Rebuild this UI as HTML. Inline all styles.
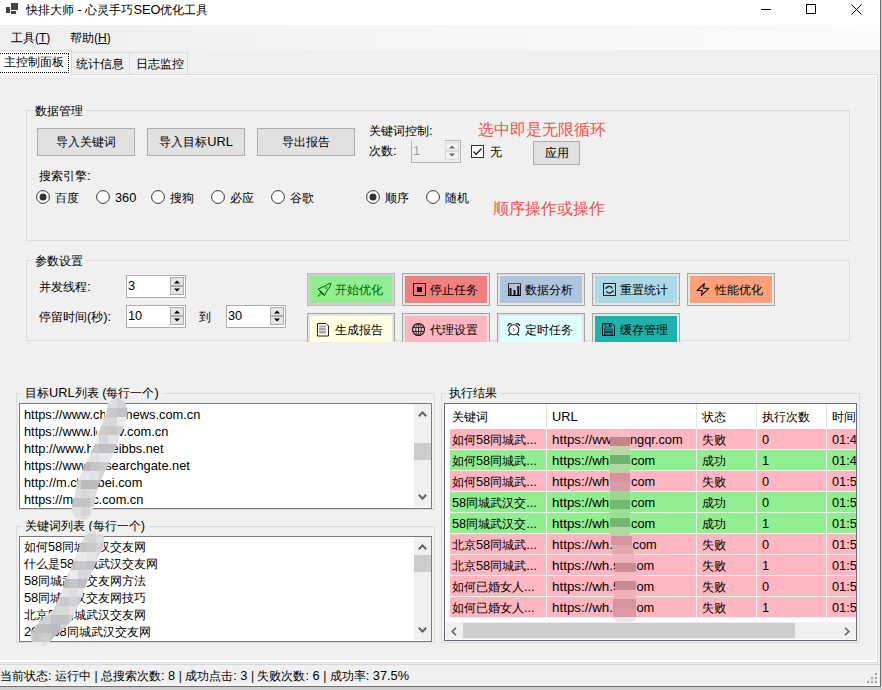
<!DOCTYPE html>
<html><head><meta charset="utf-8"><style>
*{box-sizing:border-box;margin:0;padding:0}
html,body{width:882px;height:690px;overflow:hidden;background:#f0f0f0}
body{position:relative;font-family:"Liberation Sans",sans-serif;font-size:12px;color:#000}
.a{position:absolute}
.t{position:absolute;white-space:nowrap;line-height:14px;font-size:12px}
.L{font-size:12.8px}
svg{position:absolute;overflow:visible}
</style></head><body>
<div class="a" style="left:0px;top:0px;width:880px;height:25px;background:#fff"></div>
<div class="a" style="left:6px;top:7px;width:4px;height:6px;background:#444"></div>
<div class="a" style="left:11px;top:3px;width:7px;height:7px;background:#444"></div>
<div class="a" style="left:11px;top:11px;width:5px;height:3px;background:#444"></div>
<div class="t" style="left:26px;top:3px;">快排大师<span class="L"> - </span>心灵手巧<span class="L">SEO</span>优化工具</div>
<div class="a" style="left:761px;top:9px;width:10px;height:1px;background:#000"></div>
<div class="a" style="left:806px;top:4px;width:10px;height:10px;border:1px solid #000"></div>
<svg style="left:851px;top:4px" width="11" height="11"><path d="M0.5 0.5L10.5 10.5M10.5 0.5L0.5 10.5" stroke="#000" stroke-width="1"/></svg>
<div class="a" style="left:0px;top:25px;width:880px;height:25px;background:linear-gradient(90deg,#efefef 0%,#f6f6f6 50%,#fbfbfb 100%)"></div>
<div class="t" style="left:11px;top:31px;">工具(<u>T</u>)</div>
<div class="t" style="left:70px;top:31px;">帮助(<u>H</u>)</div>
<div class="a" style="left:0px;top:50px;width:880px;height:25px;background:#f0f0f0"></div>
<div class="a" style="left:71px;top:52px;width:59px;height:23px;background:#f0f0f0;border:1px solid #d9d9d9;border-bottom:none"></div>
<div class="a" style="left:129px;top:52px;width:59px;height:23px;background:#f0f0f0;border:1px solid #d9d9d9;border-bottom:none"></div>
<div class="a" style="left:0px;top:74px;width:878px;height:1px;background:#d9d9d9"></div>
<div class="a" style="left:0px;top:75px;width:877px;height:1px;background:#fff"></div>
<div class="a" style="left:877px;top:74px;width:1px;height:589px;background:#d9d9d9"></div>
<div class="a" style="left:876px;top:75px;width:1px;height:587px;background:#fff"></div>
<div class="a" style="left:0px;top:660px;width:877px;height:2px;background:#fff"></div>
<div class="a" style="left:0px;top:662px;width:878px;height:1px;background:#dadada"></div>
<div class="a" style="left:0px;top:50px;width:72px;height:26px;background:#fff;border-top:1px solid #d9d9d9;border-right:1px solid #d9d9d9"></div>
<div class="a" style="left:0px;top:53px;width:69px;height:20px;border:1px dotted #000;border-left:none"></div>
<div class="t" style="left:4px;top:55px;">主控制面板</div>
<div class="t" style="left:76px;top:57px;">统计信息</div>
<div class="t" style="left:136px;top:57px;">日志监控</div>
<div class="a" style="left:0px;top:664px;width:880px;height:1px;background:#d7d7d7"></div>
<div class="a" style="left:0px;top:685px;width:880px;height:1px;background:#f8f8f8"></div>
<div class="t" style="left:0px;top:669px;">当前状态<span class="L">: </span>运行中 | 总搜索次数<span class="L">: 8 </span>| 成功点击<span class="L">: 3 </span>| 失败次数<span class="L">: 6 </span>| 成功率<span class="L">: 37.5%</span></div>
<div class="a" style="left:875px;top:673px;width:2px;height:2px;background:#a0a0a0"></div>
<div class="a" style="left:871px;top:677px;width:2px;height:2px;background:#a0a0a0"></div>
<div class="a" style="left:875px;top:677px;width:2px;height:2px;background:#a0a0a0"></div>
<div class="a" style="left:867px;top:681px;width:2px;height:2px;background:#a0a0a0"></div>
<div class="a" style="left:871px;top:681px;width:2px;height:2px;background:#a0a0a0"></div>
<div class="a" style="left:875px;top:681px;width:2px;height:2px;background:#a0a0a0"></div>
<div class="a" style="left:880px;top:0px;width:1px;height:687px;background:#707070"></div>
<div class="a" style="left:881px;top:0px;width:1px;height:690px;background:#d0d0d0"></div>
<div class="a" style="left:0px;top:686px;width:881px;height:1px;background:#707070"></div>
<div class="a" style="left:0px;top:687px;width:882px;height:3px;background:#cccccc"></div>
<div class="a" style="left:26px;top:110px;width:824px;height:131px;border:1px solid #dcdcdc"></div>
<div class="t" style="left:33px;top:104px;padding:0 3px 0 2px;background:#f0f0f0">数据管理</div>
<div class="a" style="left:26px;top:260px;width:824px;height:81px;border:1px solid #dcdcdc"></div>
<div class="t" style="left:33px;top:254px;padding:0 3px 0 2px;background:#f0f0f0">参数设置</div>
<div class="a" style="left:16px;top:393px;width:419px;height:117px;border:1px solid #dcdcdc"></div>
<div class="t" style="left:23px;top:386px;padding:0 3px 0 2px;background:#f0f0f0">目标<span class="L">URL</span>列表<span class="L"> (</span>每行一个<span class="L">)</span></div>
<div class="a" style="left:16px;top:526px;width:419px;height:117px;border:1px solid #dcdcdc"></div>
<div class="t" style="left:23px;top:519px;padding:0 3px 0 2px;background:#f0f0f0">关键词列表<span class="L"> (</span>每行一个<span class="L">)</span></div>
<div class="a" style="left:441px;top:393px;width:419px;height:250px;border:1px solid #dcdcdc"></div>
<div class="t" style="left:447px;top:386px;padding:0 3px 0 2px;background:#f0f0f0">执行结果</div>
<div class="a" style="left:37px;top:128px;width:98px;height:28px;background:#e1e1e1;border:1px solid #adadad"></div>
<div class="t" style="left:37px;top:135px;width:98px;text-align:center">导入关键词</div>
<div class="a" style="left:147px;top:128px;width:98px;height:28px;background:#e1e1e1;border:1px solid #adadad"></div>
<div class="t" style="left:147px;top:135px;width:98px;text-align:center">导入目标<span class="L">URL</span></div>
<div class="a" style="left:257px;top:128px;width:98px;height:28px;background:#e1e1e1;border:1px solid #adadad"></div>
<div class="t" style="left:257px;top:135px;width:98px;text-align:center">导出报告</div>
<div class="a" style="left:533px;top:141px;width:47px;height:24px;background:#e1e1e1;border:1px solid #adadad"></div>
<div class="t" style="left:533px;top:146px;width:47px;text-align:center">应用</div>
<div class="t" style="left:369px;top:124px;">关键词控制<span class="L">:</span></div>
<div class="t" style="left:369px;top:144px;">次数<span class="L">:</span></div>
<div class="t" style="left:478px;top:121px;color:#f5504f;font-size:16px;line-height:18px">选中即是无限循环</div>
<div class="t" style="left:493px;top:200px;color:#f5504f;font-size:16px;line-height:18px">顺序操作或操作</div>
<div class="a" style="left:411px;top:140px;width:50px;height:23px;background:#f0f0f0;border:1px solid #b4b4b4;border-top-color:#f0f0f0"></div>
<div class="a" style="left:445px;top:140px;width:16px;height:1px;background:#b4b4b4"></div>
<div class="t" style="left:413px;top:144px;color:#a0a0a0"><span class="L">1</span></div>
<div class="a" style="left:445px;top:142px;width:14px;height:9px;background:#f0f0f0;border:1px solid #dadada"></div>
<div class="a" style="left:445px;top:151px;width:14px;height:9px;background:#f0f0f0;border:1px solid #dadada"></div>
<svg style="left:449px;top:145px" width="6" height="4"><path d="M0 3.5L3 0.5L6 3.5Z" fill="#6a6a6a"/></svg>
<svg style="left:449px;top:153px" width="6" height="4"><path d="M0 0.5L3 3.5L6 0.5Z" fill="#6a6a6a"/></svg>
<div class="a" style="left:126px;top:275px;width:60px;height:23px;background:#fff;border:1px solid #aaacb0"></div>
<div class="t" style="left:128px;top:279px;color:#000"><span class="L">3</span></div>
<div class="a" style="left:170px;top:277px;width:14px;height:9px;background:#e5e5e5;border:1px solid #adadad"></div>
<div class="a" style="left:170px;top:286px;width:14px;height:9px;background:#e5e5e5;border:1px solid #adadad"></div>
<svg style="left:174px;top:280px" width="6" height="4"><path d="M0 3.5L3 0.5L6 3.5Z" fill="#000"/></svg>
<svg style="left:174px;top:288px" width="6" height="4"><path d="M0 0.5L3 3.5L6 0.5Z" fill="#000"/></svg>
<div class="a" style="left:126px;top:305px;width:60px;height:23px;background:#fff;border:1px solid #aaacb0"></div>
<div class="t" style="left:128px;top:309px;color:#000"><span class="L">10</span></div>
<div class="a" style="left:170px;top:307px;width:14px;height:9px;background:#e5e5e5;border:1px solid #adadad"></div>
<div class="a" style="left:170px;top:316px;width:14px;height:9px;background:#e5e5e5;border:1px solid #adadad"></div>
<svg style="left:174px;top:310px" width="6" height="4"><path d="M0 3.5L3 0.5L6 3.5Z" fill="#000"/></svg>
<svg style="left:174px;top:318px" width="6" height="4"><path d="M0 0.5L3 3.5L6 0.5Z" fill="#000"/></svg>
<div class="a" style="left:226px;top:305px;width:60px;height:23px;background:#fff;border:1px solid #aaacb0"></div>
<div class="t" style="left:228px;top:309px;color:#000"><span class="L">30</span></div>
<div class="a" style="left:270px;top:307px;width:14px;height:9px;background:#e5e5e5;border:1px solid #adadad"></div>
<div class="a" style="left:270px;top:316px;width:14px;height:9px;background:#e5e5e5;border:1px solid #adadad"></div>
<svg style="left:274px;top:310px" width="6" height="4"><path d="M0 3.5L3 0.5L6 3.5Z" fill="#000"/></svg>
<svg style="left:274px;top:318px" width="6" height="4"><path d="M0 0.5L3 3.5L6 0.5Z" fill="#000"/></svg>
<div class="t" style="left:39px;top:280px;">并发线程<span class="L">:</span></div>
<div class="t" style="left:39px;top:310px;">停留时间<span class="L">(</span>秒<span class="L">):</span></div>
<div class="t" style="left:199px;top:310px;">到</div>
<div class="a" style="left:471px;top:145px;width:13px;height:13px;background:#fff;border:1px solid #333"></div>
<svg style="left:471px;top:145px" width="13" height="13"><path d="M2.5 6.5L5.2 9.2L10.5 3.5" stroke="#222" stroke-width="1.3" fill="none"/></svg>
<div class="t" style="left:490px;top:145px;">无</div>
<div class="t" style="left:39px;top:169px;">搜索引擎<span class="L">:</span></div>
<svg style="left:35.5px;top:189.5px" width="14" height="14"><circle cx="7" cy="7" r="6.4" fill="#fff" stroke="#333" stroke-width="1"/><circle cx="7" cy="7" r="3.5" fill="#333"/></svg>
<div class="t" style="left:55px;top:191px;">百度</div>
<svg style="left:95.5px;top:189.5px" width="14" height="14"><circle cx="7" cy="7" r="6.4" fill="#fff" stroke="#333" stroke-width="1"/></svg>
<div class="t" style="left:115px;top:191px;"><span class="L">360</span></div>
<svg style="left:150.5px;top:189.5px" width="14" height="14"><circle cx="7" cy="7" r="6.4" fill="#fff" stroke="#333" stroke-width="1"/></svg>
<div class="t" style="left:170px;top:191px;">搜狗</div>
<svg style="left:210.5px;top:189.5px" width="14" height="14"><circle cx="7" cy="7" r="6.4" fill="#fff" stroke="#333" stroke-width="1"/></svg>
<div class="t" style="left:230px;top:191px;">必应</div>
<svg style="left:270.5px;top:189.5px" width="14" height="14"><circle cx="7" cy="7" r="6.4" fill="#fff" stroke="#333" stroke-width="1"/></svg>
<div class="t" style="left:290px;top:191px;">谷歌</div>
<svg style="left:365.5px;top:189.5px" width="14" height="14"><circle cx="7" cy="7" r="6.4" fill="#fff" stroke="#333" stroke-width="1"/><circle cx="7" cy="7" r="3.5" fill="#333"/></svg>
<div class="t" style="left:385px;top:191px;">顺序</div>
<svg style="left:425.5px;top:189.5px" width="14" height="14"><circle cx="7" cy="7" r="6.4" fill="#fff" stroke="#333" stroke-width="1"/></svg>
<div class="t" style="left:445px;top:191px;">随机</div>
<div class="a" style="left:0;top:0;width:882px;height:342px;overflow:hidden">
<div class="a" style="left:307px;top:273px;width:88px;height:33px;background:#cfcfd3;border:1px solid #bdbdbd"></div>
<div class="a" style="left:310px;top:276px;width:82px;height:27px;background:#90ee90"></div>
<svg style="left:317px;top:283px" width="14" height="14"><path d="M14 0.3C12 0.6 9.5 1.5 7.5 3.4L5.4 4 1 6.2 3.1 8.1 6.2 11.2 7.3 12.8 9.3 9.2 10.5 7C12.4 4.9 13.5 2.6 14 0.3Z" fill="none" stroke="#006400" stroke-width="1" stroke-linejoin="round"/><path d="M3 8.1L6.4 11.5" stroke="#005000" stroke-width="1.7"/><path d="M3.4 10C2.2 10.8 1.3 12 0.9 13.3 2.2 13 3.4 12.1 4.3 10.9" fill="none" stroke="#2a7a2a" stroke-width="0.9"/><circle cx="9.2" cy="4.8" r="1.1" fill="none" stroke="#2a8a2a" stroke-width="0.8"/></svg>
<div class="t" style="left:335px;top:283px;color:#006400">开始优化</div>
<div class="a" style="left:402px;top:273px;width:88px;height:33px;background:#e3e6e6;border:1px solid #a5a5a5"></div>
<div class="a" style="left:405px;top:276px;width:82px;height:27px;background:#f08080"></div>
<svg style="left:412px;top:283px" width="14" height="14"><rect x="1.5" y="0.5" width="12" height="12" fill="none" stroke="#111" stroke-width="1"/><rect x="5" y="4" width="5" height="5" fill="#000"/></svg>
<div class="t" style="left:430px;top:283px;color:#000">停止任务</div>
<div class="a" style="left:497px;top:273px;width:88px;height:33px;background:#e3e6e6;border:1px solid #a5a5a5"></div>
<div class="a" style="left:500px;top:276px;width:82px;height:27px;background:#b0c4de"></div>
<svg style="left:507px;top:283px" width="14" height="14"><rect x="1.5" y="0.5" width="12" height="12" fill="none" stroke="#222" stroke-width="1"/><rect x="0.8" y="0" width="13.4" height="1" fill="#555"/><rect x="2.5" y="5" width="2" height="7.5" fill="#111"/><rect x="6.5" y="7" width="2" height="5.5" fill="#111"/><rect x="10.3" y="3" width="2" height="9.5" fill="#111"/><rect x="1" y="12" width="13" height="1" fill="#000"/></svg>
<div class="t" style="left:525px;top:283px;color:#000">数据分析</div>
<div class="a" style="left:592px;top:273px;width:88px;height:33px;background:#e3e6e6;border:1px solid #a5a5a5"></div>
<div class="a" style="left:595px;top:276px;width:82px;height:27px;background:#add8e6"></div>
<svg style="left:602px;top:283px" width="14" height="14"><rect x="1.5" y="0.5" width="12" height="12" fill="none" stroke="#222" stroke-width="1"/><path d="M4.3 5.2A3.3 3.3 0 0 1 10.4 5.6M10.6 8A3.3 3.3 0 0 1 4.5 8.2" fill="none" stroke="#111" stroke-width="1.1"/><path d="M3.6 3.8L5.2 5.5 3.4 6Z" fill="#111"/><path d="M11.4 9.4L9.9 7.7 11.6 7.3Z" fill="#111"/></svg>
<div class="t" style="left:620px;top:283px;color:#000">重置统计</div>
<div class="a" style="left:687px;top:273px;width:88px;height:33px;background:#e3e6e6;border:1px solid #a5a5a5"></div>
<div class="a" style="left:690px;top:276px;width:82px;height:27px;background:#ffa07a"></div>
<svg style="left:692px;top:283px" width="14" height="14"><path d="M12.5 0.5L5.2 7.5 10.4 7.6 9.4 12.4 16.7 5.4 11.5 5.1Z" fill="none" stroke="#111" stroke-width="1.1" stroke-linejoin="round"/></svg>
<div class="t" style="left:715px;top:283px;color:#000">性能优化</div>
<div class="a" style="left:307px;top:313px;width:88px;height:33px;background:#e3e6e6;border:1px solid #a5a5a5"></div>
<div class="a" style="left:310px;top:316px;width:82px;height:27px;background:#ffffe0"></div>
<svg style="left:317px;top:323px" width="14" height="14"><path d="M0.5 0.5H9L11.5 3V13H0.5Z" fill="#fff" stroke="#222" stroke-width="1"/><rect x="2" y="2.5" width="7" height="8" fill="#a8a898"/><rect x="2" y="4" width="7" height="1" fill="#fff" opacity="0.5"/><rect x="2" y="7" width="7" height="1" fill="#fff" opacity="0.5"/></svg>
<div class="t" style="left:335px;top:323px;color:#000">生成报告</div>
<div class="a" style="left:402px;top:313px;width:88px;height:33px;background:#e3e6e6;border:1px solid #a5a5a5"></div>
<div class="a" style="left:405px;top:316px;width:82px;height:27px;background:#ffb6c1"></div>
<svg style="left:412px;top:323px" width="14" height="14"><circle cx="6.5" cy="6.5" r="6" fill="none" stroke="#111" stroke-width="1.1"/><ellipse cx="6.5" cy="6.5" rx="2.8" ry="6" fill="none" stroke="#222" stroke-width="0.9"/><path d="M6.5 0.5V12.5M1 4.5H12M1 8.5H12" stroke="#222" stroke-width="0.9"/></svg>
<div class="t" style="left:430px;top:323px;color:#000">代理设置</div>
<div class="a" style="left:497px;top:313px;width:88px;height:33px;background:#e3e6e6;border:1px solid #a5a5a5"></div>
<div class="a" style="left:500px;top:316px;width:82px;height:27px;background:#e0ffff"></div>
<svg style="left:507px;top:323px" width="14" height="14"><path d="M0.5 3L2 0.8 4.8 0.8M13 3L11.5 0.8 8.7 0.8" fill="none" stroke="#111" stroke-width="1.2"/><circle cx="6.8" cy="6.8" r="5" fill="#fff" stroke="#222" stroke-width="1.1"/><path d="M6 5L7.5 6.8 6.2 8.5" fill="none" stroke="#335" stroke-width="0.8"/><path d="M1.5 12.5L3 11M12 12.5L10.5 11" stroke="#111" stroke-width="1.1"/></svg>
<div class="t" style="left:525px;top:323px;color:#000">定时任务</div>
<div class="a" style="left:592px;top:313px;width:88px;height:33px;background:#e3e6e6;border:1px solid #a5a5a5"></div>
<div class="a" style="left:595px;top:316px;width:82px;height:27px;background:#20b2aa"></div>
<svg style="left:602px;top:323px" width="14" height="14"><path d="M0.5 0.5H10L12.5 3V12.5H0.5Z" fill="none" stroke="#111" stroke-width="1"/><rect x="3" y="1" width="6" height="3" fill="none" stroke="#114" stroke-width="0.8"/><rect x="7" y="1.5" width="1" height="2" fill="#000"/><rect x="2.5" y="6" width="8" height="6" fill="#1a8a80" stroke="#114" stroke-width="0.6"/><rect x="3" y="8" width="7" height="2" fill="#135"/></svg>
<div class="t" style="left:620px;top:323px;color:#000">缓存管理</div>
</div>
<div class="a" style="left:19px;top:403px;width:413px;height:106px;background:#fff;border:1px solid #7a7a7a"></div>
<div class="t" style="left:24px;top:407px;width:81px;overflow:hidden;font-size:12.8px;line-height:16px;height:16px">https://www.ch</div>
<div class="t" style="left:125.6px;top:407px;font-size:12.8px;line-height:16px">news.com.cn</div>
<div class="t" style="left:24px;top:424px;width:72.5px;overflow:hidden;font-size:12.8px;line-height:16px;height:16px">https://www.le</div>
<div class="t" style="left:118.0px;top:424px;font-size:12.8px;line-height:16px">v.com.cn</div>
<div class="t" style="left:24px;top:441px;width:67px;overflow:hidden;font-size:12.8px;line-height:16px;height:16px">http://www.ho</div>
<div class="t" style="left:111.6px;top:441px;font-size:12.8px;line-height:16px">eibbs.net</div>
<div class="t" style="left:24px;top:458px;width:60.6px;overflow:hidden;font-size:12.8px;line-height:16px;height:16px">https://www</div>
<div class="t" style="left:105.2px;top:458px;font-size:12.8px;line-height:16px">searchgate.net</div>
<div class="t" style="left:24px;top:475px;width:54px;overflow:hidden;font-size:12.8px;line-height:16px;height:16px">http://m.ch</div>
<div class="t" style="left:97.6px;top:475px;font-size:12.8px;line-height:16px">bei.com</div>
<div class="t" style="left:24px;top:492px;width:52px;overflow:hidden;font-size:12.8px;line-height:16px;height:16px">https://mo</div>
<div class="t" style="left:92.2px;top:492px;font-size:12.8px;line-height:16px">c.com.cn</div>
<div class="a" style="left:414px;top:404px;width:17px;height:103px;background:#f0f0f0"></div>
<div class="a" style="left:414px;top:443px;width:17px;height:17px;background:#cdcdcd"></div>
<svg style="left:418px;top:411px" width="9" height="6"><path d="M0.8 5.2L4.5 1.4 8.2 5.2" fill="none" stroke="#606060" stroke-width="2"/></svg>
<svg style="left:418px;top:494px" width="9" height="6"><path d="M0.8 0.8L4.5 4.6 8.2 0.8" fill="none" stroke="#606060" stroke-width="2"/></svg>
<div class="a" style="left:19px;top:536px;width:413px;height:106px;background:#fff;border:1px solid #7a7a7a"></div>
<div class="a" style="left:20px;top:538px;width:394px;height:103px;overflow:hidden">
<div class="t" style="left:4px;top:2px">如何<span class="L">58</span>同城武汉交友网</div>
<div class="t" style="left:4px;top:19px">什么是<span class="L">58</span>同城武汉交友网</div>
<div class="t" style="left:4px;top:36px"><span class="L">58</span>同城武汉交友网方法</div>
<div class="t" style="left:4px;top:53px"><span class="L">58</span>同城武汉交友网技巧</div>
<div class="t" style="left:4px;top:70px">北京<span class="L">58</span>同城武汉交友网</div>
<div class="t" style="left:4px;top:87px"><span class="L">202458</span>同城武汉交友网</div>
</div>
<div class="a" style="left:414px;top:537px;width:17px;height:103px;background:#f0f0f0"></div>
<div class="a" style="left:414px;top:555px;width:17px;height:17px;background:#cdcdcd"></div>
<svg style="left:418px;top:544px" width="9" height="6"><path d="M0.8 5.2L4.5 1.4 8.2 5.2" fill="none" stroke="#606060" stroke-width="2"/></svg>
<svg style="left:418px;top:627px" width="9" height="6"><path d="M0.8 0.8L4.5 4.6 8.2 0.8" fill="none" stroke="#606060" stroke-width="2"/></svg>
<div class="a" style="left:444px;top:403px;width:413px;height:238px;background:#fff;border:1px solid #646e7a"></div>
<div class="a" style="left:445px;top:404px;width:411px;height:236px;overflow:hidden">
<div class="t" style="left:7px;top:6px">关键词</div>
<div class="t" style="left:107px;top:6px"><span class="L">URL</span></div>
<div class="t" style="left:257px;top:6px">状态</div>
<div class="t" style="left:317px;top:6px">执行次数</div>
<div class="t" style="left:387px;top:6px">时间</div>
<div class="a" style="left:101px;top:0px;width:1px;height:25px;background:#e5e5e5"></div>
<div class="a" style="left:251px;top:0px;width:1px;height:25px;background:#e5e5e5"></div>
<div class="a" style="left:311px;top:0px;width:1px;height:25px;background:#e5e5e5"></div>
<div class="a" style="left:381px;top:0px;width:1px;height:25px;background:#e5e5e5"></div>
<div class="a" style="left:5px;top:25px;width:96px;height:20px;background:#ffb6c1"></div>
<div class="a" style="left:102px;top:25px;width:149px;height:20px;background:#ffb6c1"></div>
<div class="a" style="left:252px;top:25px;width:59px;height:20px;background:#ffb6c1"></div>
<div class="a" style="left:312px;top:25px;width:69px;height:20px;background:#ffb6c1"></div>
<div class="a" style="left:382px;top:25px;width:73px;height:20px;background:#ffb6c1"></div>
<div class="t" style="left:7px;top:29px">如何<span class="L">58</span>同城武<span class="L">...</span></div>
<div class="t" style="left:107px;top:29px;font-size:13.4px">https://ww</div>
<div class="t" style="left:185px;top:29px"><span class="L">ngqr.com</span></div>
<div class="t" style="left:257px;top:29px">失败</div>
<div class="t" style="left:317px;top:29px"><span class="L">0</span></div>
<div class="t" style="left:387px;top:29px"><span class="L">01:4</span></div>
<div class="a" style="left:5px;top:46px;width:96px;height:20px;background:#90ee90"></div>
<div class="a" style="left:102px;top:46px;width:149px;height:20px;background:#90ee90"></div>
<div class="a" style="left:252px;top:46px;width:59px;height:20px;background:#90ee90"></div>
<div class="a" style="left:312px;top:46px;width:69px;height:20px;background:#90ee90"></div>
<div class="a" style="left:382px;top:46px;width:73px;height:20px;background:#90ee90"></div>
<div class="t" style="left:7px;top:50px">如何<span class="L">58</span>同城武<span class="L">...</span></div>
<div class="t" style="left:107px;top:50px;font-size:13.4px">https://wh</div>
<div class="t" style="left:186px;top:50px"><span class="L">com</span></div>
<div class="t" style="left:257px;top:50px">成功</div>
<div class="t" style="left:317px;top:50px"><span class="L">1</span></div>
<div class="t" style="left:387px;top:50px"><span class="L">01:4</span></div>
<div class="a" style="left:5px;top:67px;width:96px;height:20px;background:#ffb6c1"></div>
<div class="a" style="left:102px;top:67px;width:149px;height:20px;background:#ffb6c1"></div>
<div class="a" style="left:252px;top:67px;width:59px;height:20px;background:#ffb6c1"></div>
<div class="a" style="left:312px;top:67px;width:69px;height:20px;background:#ffb6c1"></div>
<div class="a" style="left:382px;top:67px;width:73px;height:20px;background:#ffb6c1"></div>
<div class="t" style="left:7px;top:71px">如何<span class="L">58</span>同城武<span class="L">...</span></div>
<div class="t" style="left:107px;top:71px;font-size:13.4px">https://wh</div>
<div class="t" style="left:186px;top:71px"><span class="L">com</span></div>
<div class="t" style="left:257px;top:71px">失败</div>
<div class="t" style="left:317px;top:71px"><span class="L">0</span></div>
<div class="t" style="left:387px;top:71px"><span class="L">01:5</span></div>
<div class="a" style="left:5px;top:88px;width:96px;height:20px;background:#90ee90"></div>
<div class="a" style="left:102px;top:88px;width:149px;height:20px;background:#90ee90"></div>
<div class="a" style="left:252px;top:88px;width:59px;height:20px;background:#90ee90"></div>
<div class="a" style="left:312px;top:88px;width:69px;height:20px;background:#90ee90"></div>
<div class="a" style="left:382px;top:88px;width:73px;height:20px;background:#90ee90"></div>
<div class="t" style="left:7px;top:92px"><span class="L">58</span>同城武汉交<span class="L">...</span></div>
<div class="t" style="left:107px;top:92px;font-size:13.4px">https://wh</div>
<div class="t" style="left:186px;top:92px"><span class="L">com</span></div>
<div class="t" style="left:257px;top:92px">成功</div>
<div class="t" style="left:317px;top:92px"><span class="L">0</span></div>
<div class="t" style="left:387px;top:92px"><span class="L">01:5</span></div>
<div class="a" style="left:5px;top:109px;width:96px;height:20px;background:#90ee90"></div>
<div class="a" style="left:102px;top:109px;width:149px;height:20px;background:#90ee90"></div>
<div class="a" style="left:252px;top:109px;width:59px;height:20px;background:#90ee90"></div>
<div class="a" style="left:312px;top:109px;width:69px;height:20px;background:#90ee90"></div>
<div class="a" style="left:382px;top:109px;width:73px;height:20px;background:#90ee90"></div>
<div class="t" style="left:7px;top:113px"><span class="L">58</span>同城武汉交<span class="L">...</span></div>
<div class="t" style="left:107px;top:113px;font-size:13.4px">https://wh</div>
<div class="t" style="left:186px;top:113px"><span class="L">com</span></div>
<div class="t" style="left:257px;top:113px">成功</div>
<div class="t" style="left:317px;top:113px"><span class="L">1</span></div>
<div class="t" style="left:387px;top:113px"><span class="L">01:5</span></div>
<div class="a" style="left:5px;top:130px;width:96px;height:20px;background:#ffb6c1"></div>
<div class="a" style="left:102px;top:130px;width:149px;height:20px;background:#ffb6c1"></div>
<div class="a" style="left:252px;top:130px;width:59px;height:20px;background:#ffb6c1"></div>
<div class="a" style="left:312px;top:130px;width:69px;height:20px;background:#ffb6c1"></div>
<div class="a" style="left:382px;top:130px;width:73px;height:20px;background:#ffb6c1"></div>
<div class="t" style="left:7px;top:134px">北京<span class="L">58</span>同城武<span class="L">...</span></div>
<div class="t" style="left:107px;top:134px;font-size:13.4px">https://wh.</div>
<div class="t" style="left:187.5px;top:134px"><span class="L">com</span></div>
<div class="t" style="left:257px;top:134px">失败</div>
<div class="t" style="left:317px;top:134px"><span class="L">0</span></div>
<div class="t" style="left:387px;top:134px"><span class="L">01:5</span></div>
<div class="a" style="left:5px;top:151px;width:96px;height:20px;background:#ffb6c1"></div>
<div class="a" style="left:102px;top:151px;width:149px;height:20px;background:#ffb6c1"></div>
<div class="a" style="left:252px;top:151px;width:59px;height:20px;background:#ffb6c1"></div>
<div class="a" style="left:312px;top:151px;width:69px;height:20px;background:#ffb6c1"></div>
<div class="a" style="left:382px;top:151px;width:73px;height:20px;background:#ffb6c1"></div>
<div class="t" style="left:7px;top:155px">北京<span class="L">58</span>同城武<span class="L">...</span></div>
<div class="t" style="left:107px;top:155px;font-size:13.4px">https://wh.5</div>
<div class="t" style="left:191.5px;top:155px"><span class="L">om</span></div>
<div class="t" style="left:257px;top:155px">失败</div>
<div class="t" style="left:317px;top:155px"><span class="L">1</span></div>
<div class="t" style="left:387px;top:155px"><span class="L">01:5</span></div>
<div class="a" style="left:5px;top:172px;width:96px;height:20px;background:#ffb6c1"></div>
<div class="a" style="left:102px;top:172px;width:149px;height:20px;background:#ffb6c1"></div>
<div class="a" style="left:252px;top:172px;width:59px;height:20px;background:#ffb6c1"></div>
<div class="a" style="left:312px;top:172px;width:69px;height:20px;background:#ffb6c1"></div>
<div class="a" style="left:382px;top:172px;width:73px;height:20px;background:#ffb6c1"></div>
<div class="t" style="left:7px;top:176px">如何已婚女人<span class="L">...</span></div>
<div class="t" style="left:107px;top:176px;font-size:13.4px">https://wh.5</div>
<div class="t" style="left:191.5px;top:176px"><span class="L">om</span></div>
<div class="t" style="left:257px;top:176px">失败</div>
<div class="t" style="left:317px;top:176px"><span class="L">0</span></div>
<div class="t" style="left:387px;top:176px"><span class="L">01:5</span></div>
<div class="a" style="left:5px;top:193px;width:96px;height:20px;background:#ffb6c1"></div>
<div class="a" style="left:102px;top:193px;width:149px;height:20px;background:#ffb6c1"></div>
<div class="a" style="left:252px;top:193px;width:59px;height:20px;background:#ffb6c1"></div>
<div class="a" style="left:312px;top:193px;width:69px;height:20px;background:#ffb6c1"></div>
<div class="a" style="left:382px;top:193px;width:73px;height:20px;background:#ffb6c1"></div>
<div class="t" style="left:7px;top:197px">如何已婚女人<span class="L">...</span></div>
<div class="t" style="left:107px;top:197px;font-size:13.4px">https://wh.</div>
<div class="t" style="left:191.5px;top:197px"><span class="L">om</span></div>
<div class="t" style="left:257px;top:197px">失败</div>
<div class="t" style="left:317px;top:197px"><span class="L">1</span></div>
<div class="t" style="left:387px;top:197px"><span class="L">01:5</span></div>
<div class="a" style="left:1px;top:45px;width:411px;height:1px;background:#f0f0f0"></div>
<div class="a" style="left:1px;top:66px;width:411px;height:1px;background:#f0f0f0"></div>
<div class="a" style="left:1px;top:87px;width:411px;height:1px;background:#f0f0f0"></div>
<div class="a" style="left:1px;top:108px;width:411px;height:1px;background:#f0f0f0"></div>
<div class="a" style="left:1px;top:129px;width:411px;height:1px;background:#f0f0f0"></div>
<div class="a" style="left:1px;top:150px;width:411px;height:1px;background:#f0f0f0"></div>
<div class="a" style="left:1px;top:171px;width:411px;height:1px;background:#f0f0f0"></div>
<div class="a" style="left:1px;top:192px;width:411px;height:1px;background:#f0f0f0"></div>
<div class="a" style="left:1px;top:213px;width:411px;height:1px;background:#f0f0f0"></div>
<div class="a" style="left:101px;top:25px;width:1px;height:189px;background:#f0f0f0"></div>
<div class="a" style="left:251px;top:25px;width:1px;height:189px;background:#f0f0f0"></div>
<div class="a" style="left:311px;top:25px;width:1px;height:189px;background:#f0f0f0"></div>
<div class="a" style="left:381px;top:25px;width:1px;height:189px;background:#f0f0f0"></div>
<div class="a" style="left:101px;top:213px;width:1px;height:5px;background:#f0f0f0"></div>
<div class="a" style="left:251px;top:213px;width:1px;height:5px;background:#f0f0f0"></div>
<div class="a" style="left:311px;top:213px;width:1px;height:5px;background:#f0f0f0"></div>
<div class="a" style="left:381px;top:213px;width:1px;height:5px;background:#f0f0f0"></div>
<div class="a" style="left:1px;top:213px;width:410px;height:1px;background:#f0f0f0"></div>
<div class="a" style="left:0px;top:218px;width:411px;height:17px;background:#f0f0f0"></div>
<div class="a" style="left:18px;top:219px;width:332px;height:15px;background:#cdcdcd"></div>
<svg style="left:6px;top:223px" width="6" height="9"><path d="M5 0.8L1.2 4.5 5 8.2" fill="none" stroke="#606060" stroke-width="1.6"/></svg>
<svg style="left:399px;top:223px" width="6" height="9"><path d="M1 0.8L4.8 4.5 1 8.2" fill="none" stroke="#606060" stroke-width="1.6"/></svg>
<div class="a" style="left:165px;top:25px;width:20px;height:8px;background:#ffbcc6;border-radius:9px 9px 0 0;"></div>
<div class="a" style="left:165px;top:33px;width:20px;height:9px;background:#c4848f;"></div>
<div class="a" style="left:165px;top:42px;width:20px;height:9px;background:#bcd9a8;"></div>
<div class="a" style="left:165px;top:51px;width:20px;height:9px;background:#6db36d;"></div>
<div class="a" style="left:165px;top:60px;width:20px;height:9px;background:#b0d8a0;"></div>
<div class="a" style="left:165px;top:69px;width:20px;height:9px;background:#d8939e;"></div>
<div class="a" style="left:165px;top:78px;width:20px;height:9px;background:#dc9aa4;"></div>
<div class="a" style="left:165px;top:87px;width:20px;height:9px;background:#98d890;"></div>
<div class="a" style="left:165px;top:96px;width:20px;height:9px;background:#74b874;"></div>
<div class="a" style="left:165px;top:105px;width:20px;height:9px;background:#98e094;"></div>
<div class="a" style="left:165px;top:114px;width:20px;height:9px;background:#72b872;"></div>
<div class="a" style="left:165px;top:123px;width:20px;height:9px;background:#b0d8a0;"></div>
<div class="a" style="left:166px;top:132px;width:21px;height:9px;background:#d8939e;"></div>
<div class="a" style="left:167px;top:141px;width:21px;height:9px;background:#e6a6b0;"></div>
<div class="a" style="left:168px;top:150px;width:21px;height:9px;background:#f0b4be;"></div>
<div class="a" style="left:170px;top:159px;width:21px;height:9px;background:#cc8a94;"></div>
<div class="a" style="left:170px;top:168px;width:21px;height:9px;background:#fdbac4;"></div>
<div class="a" style="left:170px;top:177px;width:21px;height:9px;background:#c88a94;"></div>
<div class="a" style="left:169px;top:186px;width:22px;height:9px;background:#f0b0ba;"></div>
<div class="a" style="left:168px;top:195px;width:23px;height:9px;background:#d8949e;"></div>
<div class="a" style="left:168px;top:204px;width:23px;height:9px;background:#dc9aa4;"></div>
<div class="a" style="left:169px;top:213px;width:22px;height:5px;background:#e8e8e8;border-radius:0 0 8px 8px;"></div>
</div>
<svg style="left:0;top:0" width="882" height="690"><defs><mask id="m1" maskUnits="userSpaceOnUse" x="0" y="0" width="882" height="690"><path d="M117 409 L117 415 L110 432 L104 449 L96 466 L88 483 L84.5 500 L82 509" stroke="#fff" stroke-width="21" stroke-linecap="round" stroke-linejoin="round" fill="none"/></mask><mask id="m2" maskUnits="userSpaceOnUse" x="0" y="0" width="882" height="690"><path d="M94 541 L91 548 L83.6 565 L76 582 L70 599 L62 616 L46 630 L41 636" stroke="#fff" stroke-width="21" stroke-linecap="round" stroke-linejoin="round" fill="none"/></mask></defs><g mask="url(#m1)"><rect x="63" y="390" width="9" height="9" fill="rgb(190,190,194)"/><rect x="72" y="390" width="9" height="9" fill="rgb(211,211,211)"/><rect x="81" y="390" width="9" height="9" fill="rgb(194,194,194)"/><rect x="90" y="390" width="9" height="9" fill="rgb(201,201,204)"/><rect x="99" y="390" width="9" height="9" fill="rgb(201,201,204)"/><rect x="108" y="390" width="9" height="9" fill="rgb(211,211,212)"/><rect x="117" y="390" width="9" height="9" fill="rgb(189,189,192)"/><rect x="126" y="390" width="9" height="9" fill="rgb(186,186,189)"/><rect x="63" y="399" width="9" height="9" fill="rgb(225,225,229)"/><rect x="72" y="399" width="9" height="9" fill="rgb(236,236,236)"/><rect x="81" y="399" width="9" height="9" fill="rgb(234,234,237)"/><rect x="90" y="399" width="9" height="9" fill="rgb(220,220,221)"/><rect x="99" y="399" width="9" height="9" fill="rgb(230,230,230)"/><rect x="108" y="399" width="9" height="9" fill="rgb(222,222,222)"/><rect x="117" y="399" width="9" height="9" fill="rgb(212,212,212)"/><rect x="126" y="399" width="9" height="9" fill="rgb(232,232,236)"/><rect x="63" y="408" width="9" height="9" fill="rgb(186,186,189)"/><rect x="72" y="408" width="9" height="9" fill="rgb(207,207,208)"/><rect x="81" y="408" width="9" height="9" fill="rgb(199,199,199)"/><rect x="90" y="408" width="9" height="9" fill="rgb(202,202,203)"/><rect x="99" y="408" width="9" height="9" fill="rgb(210,210,213)"/><rect x="108" y="408" width="9" height="9" fill="rgb(201,201,205)"/><rect x="117" y="408" width="9" height="9" fill="rgb(193,193,195)"/><rect x="126" y="408" width="9" height="9" fill="rgb(193,193,194)"/><rect x="63" y="417" width="9" height="9" fill="rgb(236,236,239)"/><rect x="72" y="417" width="9" height="9" fill="rgb(221,221,221)"/><rect x="81" y="417" width="9" height="9" fill="rgb(225,225,229)"/><rect x="90" y="417" width="9" height="9" fill="rgb(232,232,232)"/><rect x="99" y="417" width="9" height="9" fill="rgb(217,217,219)"/><rect x="108" y="417" width="9" height="9" fill="rgb(215,215,217)"/><rect x="117" y="417" width="9" height="9" fill="rgb(235,235,239)"/><rect x="126" y="417" width="9" height="9" fill="rgb(225,225,229)"/><rect x="63" y="426" width="9" height="9" fill="rgb(212,212,213)"/><rect x="72" y="426" width="9" height="9" fill="rgb(195,195,197)"/><rect x="81" y="426" width="9" height="9" fill="rgb(204,204,207)"/><rect x="90" y="426" width="9" height="9" fill="rgb(202,202,205)"/><rect x="99" y="426" width="9" height="9" fill="rgb(204,204,204)"/><rect x="108" y="426" width="9" height="9" fill="rgb(201,201,202)"/><rect x="117" y="426" width="9" height="9" fill="rgb(209,209,212)"/><rect x="126" y="426" width="9" height="9" fill="rgb(199,199,200)"/><rect x="63" y="435" width="9" height="9" fill="rgb(223,223,227)"/><rect x="72" y="435" width="9" height="9" fill="rgb(234,234,236)"/><rect x="81" y="435" width="9" height="9" fill="rgb(214,214,217)"/><rect x="90" y="435" width="9" height="9" fill="rgb(233,233,237)"/><rect x="99" y="435" width="9" height="9" fill="rgb(215,215,216)"/><rect x="108" y="435" width="9" height="9" fill="rgb(228,228,231)"/><rect x="117" y="435" width="9" height="9" fill="rgb(223,223,226)"/><rect x="126" y="435" width="9" height="9" fill="rgb(235,235,235)"/><rect x="63" y="444" width="9" height="9" fill="rgb(201,201,201)"/><rect x="72" y="444" width="9" height="9" fill="rgb(195,195,199)"/><rect x="81" y="444" width="9" height="9" fill="rgb(204,204,208)"/><rect x="90" y="444" width="9" height="9" fill="rgb(198,198,199)"/><rect x="99" y="444" width="9" height="9" fill="rgb(191,191,195)"/><rect x="108" y="444" width="9" height="9" fill="rgb(193,193,193)"/><rect x="117" y="444" width="9" height="9" fill="rgb(210,210,211)"/><rect x="126" y="444" width="9" height="9" fill="rgb(203,203,207)"/><rect x="63" y="453" width="9" height="9" fill="rgb(219,219,222)"/><rect x="72" y="453" width="9" height="9" fill="rgb(228,228,230)"/><rect x="81" y="453" width="9" height="9" fill="rgb(230,230,232)"/><rect x="90" y="453" width="9" height="9" fill="rgb(226,226,228)"/><rect x="99" y="453" width="9" height="9" fill="rgb(233,233,237)"/><rect x="108" y="453" width="9" height="9" fill="rgb(231,231,231)"/><rect x="117" y="453" width="9" height="9" fill="rgb(224,224,228)"/><rect x="126" y="453" width="9" height="9" fill="rgb(216,216,220)"/><rect x="63" y="462" width="9" height="9" fill="rgb(210,210,214)"/><rect x="72" y="462" width="9" height="9" fill="rgb(192,192,195)"/><rect x="81" y="462" width="9" height="9" fill="rgb(187,187,190)"/><rect x="90" y="462" width="9" height="9" fill="rgb(197,197,201)"/><rect x="99" y="462" width="9" height="9" fill="rgb(203,203,204)"/><rect x="108" y="462" width="9" height="9" fill="rgb(202,202,205)"/><rect x="117" y="462" width="9" height="9" fill="rgb(201,201,203)"/><rect x="126" y="462" width="9" height="9" fill="rgb(199,199,201)"/><rect x="63" y="471" width="9" height="9" fill="rgb(212,212,216)"/><rect x="72" y="471" width="9" height="9" fill="rgb(229,229,233)"/><rect x="81" y="471" width="9" height="9" fill="rgb(231,231,233)"/><rect x="90" y="471" width="9" height="9" fill="rgb(226,226,230)"/><rect x="99" y="471" width="9" height="9" fill="rgb(212,212,213)"/><rect x="108" y="471" width="9" height="9" fill="rgb(232,232,233)"/><rect x="117" y="471" width="9" height="9" fill="rgb(229,229,233)"/><rect x="126" y="471" width="9" height="9" fill="rgb(217,217,217)"/><rect x="63" y="480" width="9" height="9" fill="rgb(211,211,215)"/><rect x="72" y="480" width="9" height="9" fill="rgb(211,211,213)"/><rect x="81" y="480" width="9" height="9" fill="rgb(187,187,187)"/><rect x="90" y="480" width="9" height="9" fill="rgb(188,188,188)"/><rect x="99" y="480" width="9" height="9" fill="rgb(200,200,200)"/><rect x="108" y="480" width="9" height="9" fill="rgb(210,210,212)"/><rect x="117" y="480" width="9" height="9" fill="rgb(193,193,195)"/><rect x="126" y="480" width="9" height="9" fill="rgb(189,189,193)"/><rect x="63" y="489" width="9" height="9" fill="rgb(217,217,219)"/><rect x="72" y="489" width="9" height="9" fill="rgb(221,221,221)"/><rect x="81" y="489" width="9" height="9" fill="rgb(217,217,218)"/><rect x="90" y="489" width="9" height="9" fill="rgb(220,220,224)"/><rect x="99" y="489" width="9" height="9" fill="rgb(217,217,219)"/><rect x="108" y="489" width="9" height="9" fill="rgb(232,232,234)"/><rect x="117" y="489" width="9" height="9" fill="rgb(226,226,228)"/><rect x="126" y="489" width="9" height="9" fill="rgb(227,227,230)"/><rect x="63" y="498" width="9" height="9" fill="rgb(189,189,189)"/><rect x="72" y="498" width="9" height="9" fill="rgb(195,195,198)"/><rect x="81" y="498" width="9" height="9" fill="rgb(196,196,199)"/><rect x="90" y="498" width="9" height="9" fill="rgb(211,211,212)"/><rect x="99" y="498" width="9" height="9" fill="rgb(194,194,194)"/><rect x="108" y="498" width="9" height="9" fill="rgb(194,194,198)"/><rect x="117" y="498" width="9" height="9" fill="rgb(192,192,196)"/><rect x="126" y="498" width="9" height="9" fill="rgb(199,199,199)"/><rect x="63" y="507" width="9" height="9" fill="rgb(219,219,219)"/><rect x="72" y="507" width="9" height="9" fill="rgb(224,224,225)"/><rect x="81" y="507" width="9" height="9" fill="rgb(213,213,214)"/><rect x="90" y="507" width="9" height="9" fill="rgb(226,226,230)"/><rect x="99" y="507" width="9" height="9" fill="rgb(233,233,236)"/><rect x="108" y="507" width="9" height="9" fill="rgb(229,229,230)"/><rect x="117" y="507" width="9" height="9" fill="rgb(232,232,236)"/><rect x="126" y="507" width="9" height="9" fill="rgb(226,226,227)"/><rect x="63" y="516" width="9" height="9" fill="rgb(228,228,228)"/><rect x="72" y="516" width="9" height="9" fill="rgb(224,224,228)"/><rect x="81" y="516" width="9" height="9" fill="rgb(222,222,225)"/><rect x="90" y="516" width="9" height="9" fill="rgb(213,213,215)"/><rect x="99" y="516" width="9" height="9" fill="rgb(216,216,217)"/><rect x="108" y="516" width="9" height="9" fill="rgb(213,213,215)"/><rect x="117" y="516" width="9" height="9" fill="rgb(214,214,214)"/><rect x="126" y="516" width="9" height="9" fill="rgb(221,221,223)"/><rect x="63" y="525" width="9" height="9" fill="rgb(235,235,236)"/><rect x="72" y="525" width="9" height="9" fill="rgb(225,225,229)"/><rect x="81" y="525" width="9" height="9" fill="rgb(220,220,221)"/><rect x="90" y="525" width="9" height="9" fill="rgb(212,212,216)"/><rect x="99" y="525" width="9" height="9" fill="rgb(213,213,217)"/><rect x="108" y="525" width="9" height="9" fill="rgb(218,218,222)"/><rect x="117" y="525" width="9" height="9" fill="rgb(226,226,227)"/><rect x="126" y="525" width="9" height="9" fill="rgb(236,236,240)"/></g><g mask="url(#m2)"><rect x="24" y="525" width="9" height="9" fill="rgb(213,213,213)"/><rect x="33" y="525" width="9" height="9" fill="rgb(214,214,216)"/><rect x="42" y="525" width="9" height="9" fill="rgb(217,217,219)"/><rect x="51" y="525" width="9" height="9" fill="rgb(220,220,224)"/><rect x="60" y="525" width="9" height="9" fill="rgb(218,218,222)"/><rect x="69" y="525" width="9" height="9" fill="rgb(213,213,217)"/><rect x="78" y="525" width="9" height="9" fill="rgb(233,233,234)"/><rect x="87" y="525" width="9" height="9" fill="rgb(225,225,228)"/><rect x="96" y="525" width="9" height="9" fill="rgb(235,235,239)"/><rect x="105" y="525" width="9" height="9" fill="rgb(223,223,227)"/><rect x="114" y="525" width="9" height="9" fill="rgb(226,226,230)"/><rect x="24" y="534" width="9" height="9" fill="rgb(220,220,220)"/><rect x="33" y="534" width="9" height="9" fill="rgb(212,212,214)"/><rect x="42" y="534" width="9" height="9" fill="rgb(226,226,228)"/><rect x="51" y="534" width="9" height="9" fill="rgb(224,224,227)"/><rect x="60" y="534" width="9" height="9" fill="rgb(228,228,229)"/><rect x="69" y="534" width="9" height="9" fill="rgb(229,229,230)"/><rect x="78" y="534" width="9" height="9" fill="rgb(219,219,220)"/><rect x="87" y="534" width="9" height="9" fill="rgb(212,212,213)"/><rect x="96" y="534" width="9" height="9" fill="rgb(222,222,223)"/><rect x="105" y="534" width="9" height="9" fill="rgb(216,216,220)"/><rect x="114" y="534" width="9" height="9" fill="rgb(228,228,230)"/><rect x="24" y="543" width="9" height="9" fill="rgb(202,202,206)"/><rect x="33" y="543" width="9" height="9" fill="rgb(191,191,194)"/><rect x="42" y="543" width="9" height="9" fill="rgb(211,211,214)"/><rect x="51" y="543" width="9" height="9" fill="rgb(209,209,213)"/><rect x="60" y="543" width="9" height="9" fill="rgb(210,210,212)"/><rect x="69" y="543" width="9" height="9" fill="rgb(211,211,215)"/><rect x="78" y="543" width="9" height="9" fill="rgb(197,197,199)"/><rect x="87" y="543" width="9" height="9" fill="rgb(200,200,201)"/><rect x="96" y="543" width="9" height="9" fill="rgb(210,210,213)"/><rect x="105" y="543" width="9" height="9" fill="rgb(208,208,211)"/><rect x="114" y="543" width="9" height="9" fill="rgb(206,206,210)"/><rect x="24" y="552" width="9" height="9" fill="rgb(219,219,222)"/><rect x="33" y="552" width="9" height="9" fill="rgb(220,220,223)"/><rect x="42" y="552" width="9" height="9" fill="rgb(228,228,232)"/><rect x="51" y="552" width="9" height="9" fill="rgb(223,223,226)"/><rect x="60" y="552" width="9" height="9" fill="rgb(226,226,228)"/><rect x="69" y="552" width="9" height="9" fill="rgb(230,230,234)"/><rect x="78" y="552" width="9" height="9" fill="rgb(235,235,238)"/><rect x="87" y="552" width="9" height="9" fill="rgb(227,227,228)"/><rect x="96" y="552" width="9" height="9" fill="rgb(222,222,223)"/><rect x="105" y="552" width="9" height="9" fill="rgb(231,231,233)"/><rect x="114" y="552" width="9" height="9" fill="rgb(236,236,239)"/><rect x="24" y="561" width="9" height="9" fill="rgb(195,195,197)"/><rect x="33" y="561" width="9" height="9" fill="rgb(211,211,215)"/><rect x="42" y="561" width="9" height="9" fill="rgb(203,203,207)"/><rect x="51" y="561" width="9" height="9" fill="rgb(202,202,206)"/><rect x="60" y="561" width="9" height="9" fill="rgb(204,204,207)"/><rect x="69" y="561" width="9" height="9" fill="rgb(195,195,196)"/><rect x="78" y="561" width="9" height="9" fill="rgb(201,201,205)"/><rect x="87" y="561" width="9" height="9" fill="rgb(197,197,201)"/><rect x="96" y="561" width="9" height="9" fill="rgb(188,188,190)"/><rect x="105" y="561" width="9" height="9" fill="rgb(209,209,209)"/><rect x="114" y="561" width="9" height="9" fill="rgb(212,212,213)"/><rect x="24" y="570" width="9" height="9" fill="rgb(235,235,235)"/><rect x="33" y="570" width="9" height="9" fill="rgb(213,213,217)"/><rect x="42" y="570" width="9" height="9" fill="rgb(232,232,232)"/><rect x="51" y="570" width="9" height="9" fill="rgb(220,220,224)"/><rect x="60" y="570" width="9" height="9" fill="rgb(219,219,219)"/><rect x="69" y="570" width="9" height="9" fill="rgb(236,236,240)"/><rect x="78" y="570" width="9" height="9" fill="rgb(216,216,218)"/><rect x="87" y="570" width="9" height="9" fill="rgb(219,219,220)"/><rect x="96" y="570" width="9" height="9" fill="rgb(213,213,216)"/><rect x="105" y="570" width="9" height="9" fill="rgb(234,234,234)"/><rect x="114" y="570" width="9" height="9" fill="rgb(213,213,215)"/><rect x="24" y="579" width="9" height="9" fill="rgb(197,197,198)"/><rect x="33" y="579" width="9" height="9" fill="rgb(193,193,193)"/><rect x="42" y="579" width="9" height="9" fill="rgb(188,188,188)"/><rect x="51" y="579" width="9" height="9" fill="rgb(188,188,188)"/><rect x="60" y="579" width="9" height="9" fill="rgb(187,187,187)"/><rect x="69" y="579" width="9" height="9" fill="rgb(197,197,199)"/><rect x="78" y="579" width="9" height="9" fill="rgb(190,190,191)"/><rect x="87" y="579" width="9" height="9" fill="rgb(209,209,210)"/><rect x="96" y="579" width="9" height="9" fill="rgb(202,202,202)"/><rect x="105" y="579" width="9" height="9" fill="rgb(198,198,202)"/><rect x="114" y="579" width="9" height="9" fill="rgb(187,187,188)"/><rect x="24" y="588" width="9" height="9" fill="rgb(216,216,216)"/><rect x="33" y="588" width="9" height="9" fill="rgb(212,212,214)"/><rect x="42" y="588" width="9" height="9" fill="rgb(231,231,231)"/><rect x="51" y="588" width="9" height="9" fill="rgb(221,221,223)"/><rect x="60" y="588" width="9" height="9" fill="rgb(227,227,227)"/><rect x="69" y="588" width="9" height="9" fill="rgb(221,221,224)"/><rect x="78" y="588" width="9" height="9" fill="rgb(229,229,233)"/><rect x="87" y="588" width="9" height="9" fill="rgb(235,235,235)"/><rect x="96" y="588" width="9" height="9" fill="rgb(220,220,223)"/><rect x="105" y="588" width="9" height="9" fill="rgb(231,231,232)"/><rect x="114" y="588" width="9" height="9" fill="rgb(227,227,228)"/><rect x="24" y="597" width="9" height="9" fill="rgb(188,188,190)"/><rect x="33" y="597" width="9" height="9" fill="rgb(212,212,212)"/><rect x="42" y="597" width="9" height="9" fill="rgb(186,186,189)"/><rect x="51" y="597" width="9" height="9" fill="rgb(211,211,212)"/><rect x="60" y="597" width="9" height="9" fill="rgb(202,202,206)"/><rect x="69" y="597" width="9" height="9" fill="rgb(210,210,213)"/><rect x="78" y="597" width="9" height="9" fill="rgb(201,201,205)"/><rect x="87" y="597" width="9" height="9" fill="rgb(196,196,197)"/><rect x="96" y="597" width="9" height="9" fill="rgb(196,196,198)"/><rect x="105" y="597" width="9" height="9" fill="rgb(194,194,198)"/><rect x="114" y="597" width="9" height="9" fill="rgb(199,199,199)"/><rect x="24" y="606" width="9" height="9" fill="rgb(234,234,238)"/><rect x="33" y="606" width="9" height="9" fill="rgb(216,216,216)"/><rect x="42" y="606" width="9" height="9" fill="rgb(220,220,220)"/><rect x="51" y="606" width="9" height="9" fill="rgb(216,216,217)"/><rect x="60" y="606" width="9" height="9" fill="rgb(217,217,217)"/><rect x="69" y="606" width="9" height="9" fill="rgb(226,226,227)"/><rect x="78" y="606" width="9" height="9" fill="rgb(228,228,228)"/><rect x="87" y="606" width="9" height="9" fill="rgb(219,219,220)"/><rect x="96" y="606" width="9" height="9" fill="rgb(234,234,237)"/><rect x="105" y="606" width="9" height="9" fill="rgb(214,214,216)"/><rect x="114" y="606" width="9" height="9" fill="rgb(214,214,218)"/><rect x="24" y="615" width="9" height="9" fill="rgb(193,193,197)"/><rect x="33" y="615" width="9" height="9" fill="rgb(211,211,215)"/><rect x="42" y="615" width="9" height="9" fill="rgb(208,208,210)"/><rect x="51" y="615" width="9" height="9" fill="rgb(194,194,197)"/><rect x="60" y="615" width="9" height="9" fill="rgb(194,194,198)"/><rect x="69" y="615" width="9" height="9" fill="rgb(210,210,210)"/><rect x="78" y="615" width="9" height="9" fill="rgb(190,190,190)"/><rect x="87" y="615" width="9" height="9" fill="rgb(198,198,201)"/><rect x="96" y="615" width="9" height="9" fill="rgb(191,191,191)"/><rect x="105" y="615" width="9" height="9" fill="rgb(202,202,202)"/><rect x="114" y="615" width="9" height="9" fill="rgb(193,193,193)"/><rect x="24" y="624" width="9" height="9" fill="rgb(189,189,189)"/><rect x="33" y="624" width="9" height="9" fill="rgb(191,191,192)"/><rect x="42" y="624" width="9" height="9" fill="rgb(189,189,190)"/><rect x="51" y="624" width="9" height="9" fill="rgb(186,186,190)"/><rect x="60" y="624" width="9" height="9" fill="rgb(207,207,210)"/><rect x="69" y="624" width="9" height="9" fill="rgb(200,200,202)"/><rect x="78" y="624" width="9" height="9" fill="rgb(203,203,206)"/><rect x="87" y="624" width="9" height="9" fill="rgb(192,192,193)"/><rect x="96" y="624" width="9" height="9" fill="rgb(209,209,212)"/><rect x="105" y="624" width="9" height="9" fill="rgb(199,199,203)"/><rect x="114" y="624" width="9" height="9" fill="rgb(186,186,190)"/><rect x="24" y="633" width="9" height="9" fill="rgb(204,204,204)"/><rect x="33" y="633" width="9" height="9" fill="rgb(199,199,203)"/><rect x="42" y="633" width="9" height="9" fill="rgb(204,204,205)"/><rect x="51" y="633" width="9" height="9" fill="rgb(189,189,192)"/><rect x="60" y="633" width="9" height="9" fill="rgb(197,197,197)"/><rect x="69" y="633" width="9" height="9" fill="rgb(202,202,202)"/><rect x="78" y="633" width="9" height="9" fill="rgb(205,205,207)"/><rect x="87" y="633" width="9" height="9" fill="rgb(195,195,197)"/><rect x="96" y="633" width="9" height="9" fill="rgb(195,195,195)"/><rect x="105" y="633" width="9" height="9" fill="rgb(207,207,210)"/><rect x="114" y="633" width="9" height="9" fill="rgb(189,189,189)"/><rect x="24" y="642" width="9" height="9" fill="rgb(221,221,222)"/><rect x="33" y="642" width="9" height="9" fill="rgb(236,236,236)"/><rect x="42" y="642" width="9" height="9" fill="rgb(226,226,226)"/><rect x="51" y="642" width="9" height="9" fill="rgb(225,225,228)"/><rect x="60" y="642" width="9" height="9" fill="rgb(226,226,227)"/><rect x="69" y="642" width="9" height="9" fill="rgb(230,230,234)"/><rect x="78" y="642" width="9" height="9" fill="rgb(214,214,214)"/><rect x="87" y="642" width="9" height="9" fill="rgb(221,221,221)"/><rect x="96" y="642" width="9" height="9" fill="rgb(223,223,225)"/><rect x="105" y="642" width="9" height="9" fill="rgb(235,235,235)"/><rect x="114" y="642" width="9" height="9" fill="rgb(219,219,222)"/><rect x="24" y="651" width="9" height="9" fill="rgb(218,218,218)"/><rect x="33" y="651" width="9" height="9" fill="rgb(230,230,232)"/><rect x="42" y="651" width="9" height="9" fill="rgb(224,224,227)"/><rect x="51" y="651" width="9" height="9" fill="rgb(216,216,218)"/><rect x="60" y="651" width="9" height="9" fill="rgb(224,224,224)"/><rect x="69" y="651" width="9" height="9" fill="rgb(220,220,220)"/><rect x="78" y="651" width="9" height="9" fill="rgb(215,215,215)"/><rect x="87" y="651" width="9" height="9" fill="rgb(231,231,233)"/><rect x="96" y="651" width="9" height="9" fill="rgb(232,232,235)"/><rect x="105" y="651" width="9" height="9" fill="rgb(218,218,218)"/><rect x="114" y="651" width="9" height="9" fill="rgb(212,212,216)"/></g></svg>
</body></html>
